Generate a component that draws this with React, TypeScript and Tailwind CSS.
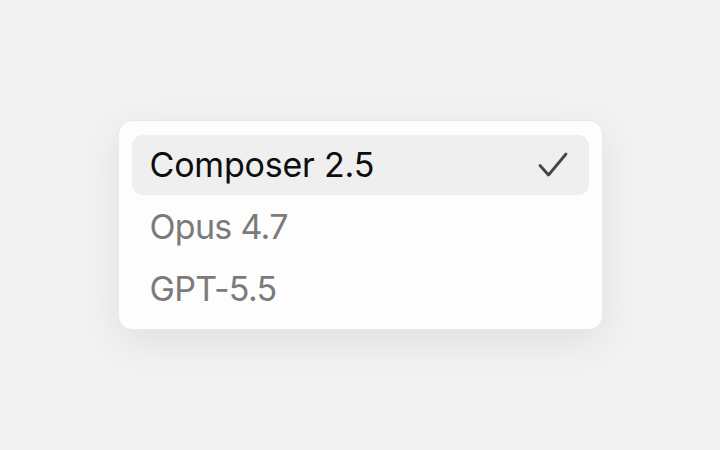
import React from 'react';

interface ModelOption {
    name: string;
    selected?: boolean;
}

const options: ModelOption[] = [
    { name: 'Composer 2.5', selected: true },
    { name: 'Opus 4.7' },
    { name: 'GPT-5.5' },
];

const CheckIcon: React.FC = () => (
    <svg width="30" height="26" viewBox="0 0 30 26" fill="none" className="text-[#444444]">
        <path d="M2 13.5L10.5 23L28 2" stroke="currentColor" strokeWidth="2.8" strokeLinecap="round" strokeLinejoin="round" />
    </svg>
);

const App: React.FC = () => {
    return (
        <div className="w-[720px] h-[450px] bg-[#f2f2f2] flex items-center justify-center font-['Inter',_'Liberation_Sans',_sans-serif]">
            <div className="w-[485px] h-[210px] bg-[#fdfdfd] rounded-[14px] border border-[#e9e9e9] shadow-[0_12px_40px_rgba(0,0,0,0.08)] pt-[14px] pb-[10px] px-[13px] flex flex-col gap-[2px]">
                {options.map(opt => (
                    <div
                        key={opt.name}
                        className={`h-[60px] flex items-center justify-between pl-[18px] pr-[21px] rounded-[11px] ${opt.selected ? 'bg-[#efefef]' : ''}`}
                    >
                        <span className={`text-[34px] leading-none ${opt.selected ? 'text-[#0d0d0d] tracking-[-0.2px]' : 'text-[#7b7b7b] tracking-[-0.7px]'}`}>
                            {opt.name}
                        </span>
                        {opt.selected && <CheckIcon />}
                    </div>
                ))}
            </div>
        </div>
    );
};

export default App;
